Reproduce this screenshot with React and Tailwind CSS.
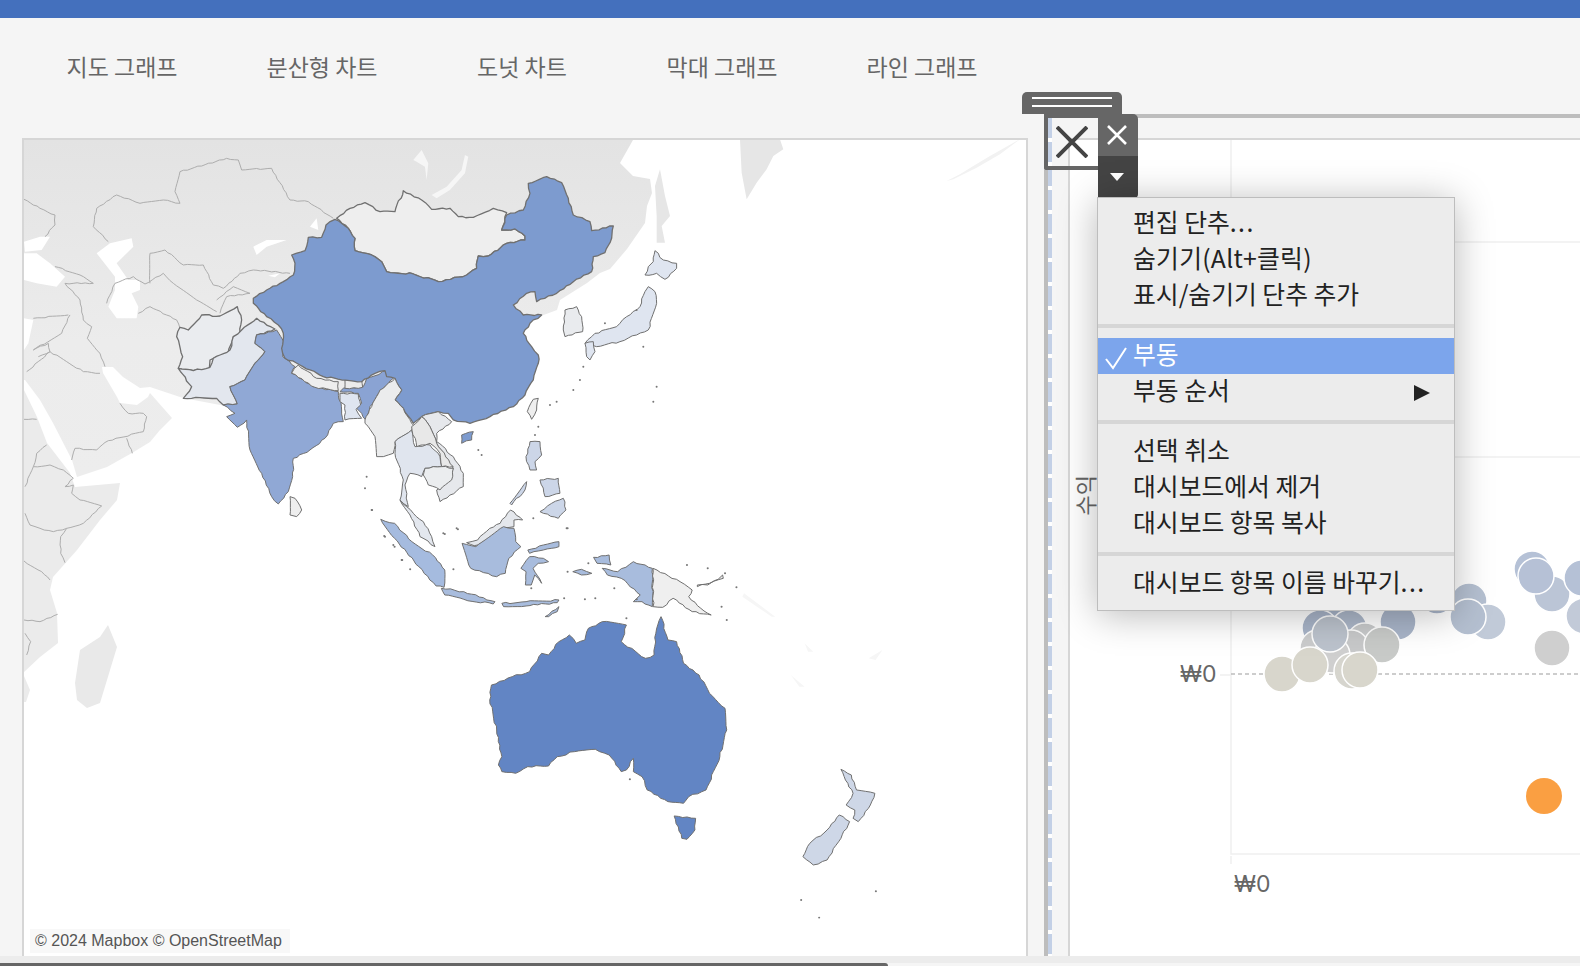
const KR = { fontFamily: '"Noto Sans CJK KR", "Noto Sans", sans-serif' };

const tabs = ['지도 그래프', '분산형 차트', '도넛 차트', '막대 그래프', '라인 그래프'];

// traced from zoomed crops, each group has its own origin
const ASIA = { // origin 240,160
  china: '40,415 80,390 130,365 160,345 165,310 155,285 195,272 205,232 245,232 258,195 285,178 325,205 345,235 345,272 395,285 425,305 440,335 520,342 595,365 680,345 710,325 715,288 745,288 800,250 855,240 855,228 825,207 785,210 800,165 850,150 870,100 865,70 920,50 965,68 985,115 1000,165 1050,185 1055,212 1120,198 1115,235 1095,278 1060,290 1055,335 1000,365 950,400 890,425 885,395 860,400 820,435 850,465 905,465 870,490 850,520 875,560 895,585 895,610 880,660 855,705 820,740 750,770 690,790 640,780 625,760 595,755 545,770 520,790 490,745 465,720 485,690 465,655 440,650 435,632 405,640 365,665 305,660 250,650 210,630 180,615 135,595 125,565 130,520 115,495 80,470 40,430',
  mongolia: '290,175 325,205 345,235 345,272 395,285 425,305 440,335 520,342 595,365 680,345 710,325 715,288 745,288 800,250 855,240 855,228 825,207 785,210 800,158 760,145 700,172 655,170 630,145 575,148 545,120 490,92 465,155 420,155 375,128 330,145',
  myanmar: '375,780 395,740 420,690 465,655 485,690 465,720 490,745 515,790 525,800 510,815 465,845 460,880 430,890 410,890 405,830 375,790',
  thailand: '465,845 515,810 525,860 570,855 600,890 605,920 555,925 545,950 510,940 495,975 505,1040 480,1020 490,960 465,880',
  laos: '515,800 545,770 570,800 590,850 640,920 605,920 600,880 570,850 530,860',
  vietnam: '545,770 595,755 635,785 590,820 590,845 640,890 670,940 670,980 600,1025 590,990 630,960 640,925 590,850 570,800',
  cambodia: '555,925 605,920 640,925 635,960 600,990 565,975 550,945',
  malaya: '480,1020 500,1040 520,1060 550,1085 575,1130 585,1160 540,1130 510,1065',
  lanka: '150,1010 165,1015 185,1050 170,1070 150,1065',
  taiwan: '880,718 895,715 890,750 875,778 862,755',
  hainan: '665,825 700,815 695,840 665,850',
  korea: '975,450 1010,440 1025,470 1028,515 975,530 970,510',
  hokkaido: '1245,272 1270,300 1310,310 1310,325 1275,358 1250,340 1215,345 1225,320 1240,305',
  honshu: '1225,380 1245,395 1250,430 1225,510 1190,525 1140,545 1070,560 1035,550 1065,520 1130,500 1160,470 1200,440 1215,395',
  kyushu: '1035,550 1060,545 1065,575 1050,600 1040,590',
  luzon: '870,845 900,845 905,885 885,905 890,930 870,930 858,890',
  visayas: '900,960 955,955 960,1000 915,1010',
  mindanao: '935,1030 970,1015 978,1050 955,1075 900,1055',
  palawan: '810,1030 860,965 855,990 815,1035',
};

const SOUTH = { // origin 0,130
  india: '770,615 830,600 855,640 848,680 885,710 875,730 940,770 1015,785 1025,840 1030,875 1000,880 975,925 930,960 880,985 878,1040 865,1085 835,1122 815,1100 785,1030 750,960 740,870 712,892 680,860 705,850 670,825 712,822 690,770 735,750 765,700 795,665 765,640',
  assam: '1020,785 1030,775 1090,770 1100,745 1160,722 1180,745 1135,790 1110,830 1100,880 1085,850 1070,835 1085,820 1075,790',
  bhutan: '1035,750 1085,750 1088,772 1035,775',
  nepal: '875,730 895,705 950,745 1015,755 1015,782 945,772',
  bangladesh: '1020,790 1075,792 1082,825 1068,838 1085,865 1035,870 1035,825 1020,815',
  pakistan: '725,600 770,565 825,597 770,615 765,640 795,665 765,700 735,750 690,770 712,822 670,825 650,805 575,805 550,805 575,770 535,715 580,722 630,712 640,685 690,660 700,620',
  afghanistan: '530,620 540,592 565,600 605,555 660,558 712,530 725,570 720,610 700,620 685,670 630,690 628,715 580,722 535,715 548,680',
};

const OCEANIA = { // origin 360,500, x is scaled 2.89
  sumatra: '60,58 100,70 150,125 210,165 245,210 243,262 220,258 170,200 100,115',
  borneo: '295,130 335,140 415,80 445,85 450,125 465,140 430,175 420,220 395,230 345,212 320,205',
  sabah: '308,128 330,137 385,115 410,85 445,80 445,60 470,60 435,30 405,70 375,85 340,120',
  sulawesi: '465,205 490,170 530,175 545,185 515,190 500,205 525,250 505,225 495,255 478,255 480,215',
  sulawesiArm: '485,150 530,135 575,125 575,140 530,150 490,160',
  java: '235,265 300,275 390,305 385,312 300,298 245,285',
  sunda: '410,310 480,305 575,300 570,308 480,318 415,320',
  timor: '535,350 575,320 570,335 545,350',
  papua: '700,205 745,215 790,185 845,205 845,320 815,305 790,305 810,285 755,235 715,225',
  birdshead: '675,172 720,165 725,195 685,190',
  seram: '615,215 640,208 670,220 640,225',
  png: '847,205 925,245 960,270 950,290 985,325 1015,345 960,335 905,295 875,322 847,320',
  britain: '975,260 1010,250 1050,235 1048,225 1035,238 1005,255 975,255',
  australia: '375,600 380,555 440,530 490,515 525,460 545,465 575,425 605,405 625,430 650,420 660,385 700,365 770,375 755,425 825,475 850,465 855,400 870,350 890,420 915,425 935,490 980,525 1010,580 1055,625 1060,690 1040,770 1000,870 950,890 935,910 890,905 830,870 815,830 790,815 790,775 770,810 755,815 720,765 680,748 620,755 570,770 545,798 485,800 450,820 410,815 400,795 410,770 395,690',
  tasmania: '908,948 970,955 968,990 945,1018 930,1015',
  nzSouth: '1280,1070 1300,1030 1350,990 1385,945 1415,965 1390,1015 1350,1080 1310,1095',
  nzNorth: '1390,808 1420,825 1435,870 1488,880 1475,915 1440,965 1425,955 1430,930 1405,915 1425,880 1410,850',
};

const islandDots = [
  [70,108],[100,140],[122,180],[145,208],[245,102],[283,88],[270,208],[600,215],[660,190],[735,265],[800,298],[680,295],[590,295],[650,298],
  [945,195],[1005,205],[1055,220],[1088,262],[1045,320],[1060,360],[770,355],[1275,1200],[1327,1253],[1491,1174],[35,30],[600,85],[495,265],[780,838],
];
const asiaDots = [
  [380,950],[375,985],[395,1050],[435,1130],[460,1155],[485,1200],[610,1120],[650,1105],[715,870],[725,885],[1030,620],[1000,690],[1020,660],
  [930,735],[950,725],[1250,680],[1240,725],[885,825],[895,800],[980,1105],[880,1075],[1190,450],[1095,490],[1210,560],
];

const greyLines = [ // origin 0,130
  '280,290 290,235 350,195 420,220 490,210 540,220 525,185 540,125 680,85 715,90 725,120 815,115 870,210 925,215 1000,265',
  '72,208 120,235 165,255 165,285 135,320',
  '280,290 325,335',
  '450,460 450,370 495,360 550,405 610,405 640,465 670,475 720,430 760,420 870,430',
  '320,520 345,460 400,440 435,462 490,430 520,460 590,510 650,545',
  '415,550 450,530 530,570 540,595',
  '650,510 700,470 750,490 680,500 660,550',
  '165,410 240,435 280,460 195,460 240,510 250,570 275,590 262,625 300,670 315,710',
  '205,555 100,565',
  '210,555 185,610 100,660 145,640 150,665 250,725 300,730',
  '115,680 150,665 80,725',
];
const africaLines = [ // origin 20,380
  '155,240 165,205 230,210 265,182 370,155 380,110 370,100 325,100 300,70',
  '320,175 337,220',
  '12,118 50,118',
  '80,195 50,220 40,260 15,320',
  '40,260 90,255 130,270 160,295 135,320 160,315 155,340 180,360 245,378 190,430 140,445 100,455 60,445 30,435 15,400',
  '140,445 122,470 122,520 135,548',
  '12,543 65,575 90,600',
  '12,720 60,725 113,703',
  '15,760 32,785 20,825',
];

// breaks long straight edges into small wobbles so coasts don't look cut with a ruler
function rough(points, amp = 2.6, closed = true) {
  const p = points.trim().split(' ').map((s) => s.split(',').map(Number));
  const out = [];
  p.forEach((a, i) => {
    out.push(a.join(','));
    if (!closed && i === p.length - 1) return;
    const b = p[(i + 1) % p.length];
    const flip = !(a[0] < b[0] || (a[0] === b[0] && a[1] < b[1]));
    const [u, v] = flip ? [b, a] : [a, b];
    const dx = v[0] - u[0];
    const dy = v[1] - u[1];
    const len = Math.hypot(dx, dy);
    const n = Math.floor(len / 11);
    const mids = [];
    for (let k = 1; k < n; k++) {
      const s = Math.sin(u[0] * 12.9 + u[1] * 78.2 + k * 37.7) * 43758.5;
      const r = (s - Math.floor(s) - 0.5) * 2 * amp;
      mids.push(`${u[0] + (dx * k) / n - (dy / len) * r},${u[1] + (dy * k) / n + (dx / len) * r}`);
    }
    if (flip) mids.reverse();
    out.push(...mids);
  });
  return out.join(' ');
}

function Land({ points, fill, stroke = '#707070', width = 1 }) {
  return <polygon points={rough(points)} fill={fill} stroke={stroke} strokeWidth={width} strokeLinejoin="round" vectorEffect="non-scaling-stroke" />;
}

function Border({ points }) {
  return <polyline points={rough(points, 2, false)} vectorEffect="non-scaling-stroke" />;
}

function MapDrawing() {
  return (
    <svg viewBox="24 140 1002 816" className="block w-full h-full bg-white">
      <defs>
        <linearGradient id="land" x1="0" y1="0" x2="0" y2="1">
          <stop offset="0" stopColor="#e3e3e3" />
          <stop offset="0.6" stopColor="#ececec" />
          <stop offset="1" stopColor="#ededed" />
        </linearGradient>
      </defs>

      {/* grey base map */}
      <polygon fill="url(#land)" points="24,140 633,140 620,163 633,176 650,179 652,193 647,206 645,223 627,249 610,269 600,273 587,283 560,300 557,310 530,320 300,420 183,398 150,387 140,388 123,377 113,367 102,367 103,373 117,397 120,403 137,405 148,397 150,393 172,418 160,430 150,442 132,453 107,467 77,477 72,460 53,423 40,400 25,380 24,380" />
      <polygon fill="#ebebeb" points="24,390 37,417 47,443 70,473 75,487 120,483 117,500 100,520 77,550 53,577 50,590 57,613 58,643 40,657 24,672" />
      <polygon fill="#ebebeb" points="24,676 30,690 26,702 24,702" />
      <polygon fill="#e9e9e9" points="108,625 117,647 100,703 87,708 77,700 75,683 80,650 100,637" />
      <g transform="translate(600 136) scale(.3333)">
        <polygon fill="#e6e6e6" points="420,10 540,10 550,40 520,60 500,100 470,140 440,190 425,110" />
        <polygon fill="#e6e6e6" points="180,100 195,180 210,240 185,270 195,320 170,320 170,240 165,150" />
        <polygon fill="#f2f2f2" points="1040,135 1080,115 1120,90 1170,60 1250,15 1260,10 1200,55 1130,95 1060,130" />
      </g>
      <g transform="translate(360 500) scale(.346 .3333)" fill="#f6f6f6">
        <polygon points="1110,280 1200,350 1190,350 1105,290" />
        <polygon points="1245,525 1285,560 1270,560" />
        <polygon points="1285,430 1310,455 1295,455" />
        <polygon points="1470,475 1510,450 1490,480" />
      </g>

      {/* inland seas */}
      <g transform="translate(0 130) scale(.3333)" fill="#ffffff">
        <polygon points="72,370 110,370 150,400 195,440 170,470 110,460 72,450" />
        <polygon points="72,335 120,320 150,320 125,360 75,365" />
        <polygon points="290,370 330,340 395,325 400,350 350,400 385,450 420,450 420,480 395,490 415,530 410,565 350,565 325,530 345,480 345,440" />
        <polygon points="760,350 800,330 860,330 800,350 770,375" />
        <polygon points="805,437 840,430 825,442" />
        <polygon points="930,290 950,265 955,300" />
        <polygon points="72,565 100,570 85,640 72,660" />
        <polygon fill="#f6f6f6" points="1295,195 1340,170 1385,120 1395,75 1405,80 1395,130 1350,180 1310,205" />
        <polygon fill="#f6f6f6" points="1240,90 1265,60 1285,100 1280,150 1275,110 1250,95" />
      </g>
      <g fill="none" stroke="#adadad" strokeWidth="1">
        <g transform="translate(0 130) scale(.3333)">
          {greyLines.map((l, i) => <Border key={i} points={l} />)}
        </g>
        <g transform="translate(20 380) scale(.3333)">
          {africaLines.map((l, i) => <Border key={i} points={l} />)}
        </g>
      </g>

      {/* countries with data */}
      <g transform="translate(0 130) scale(.3333)">
        <Land points={SOUTH.afghanistan} fill="#eaecef" width={1.3} />
        <Land points={SOUTH.pakistan} fill="#e3e7ee" width={1.3} />
        <Land points={SOUTH.india} fill="#90a8d5" />
        <Land points={SOUTH.assam} fill="#8aa3d3" />
        <Land points={SOUTH.nepal} fill="#eeeeee" />
        <Land points={SOUTH.bhutan} fill="#ebebeb" />
        <Land points={SOUTH.bangladesh} fill="#dfe5f0" />
      </g>
      <g transform="translate(240 160) scale(.3333)">
        <Land points={ASIA.mongolia} fill="#eeeeee" width={1.3} />
        <Land points={ASIA.china} fill="#7d9bcf" width={1.3} />
        <Land points={ASIA.myanmar} fill="#ebeced" />
        <Land points={ASIA.thailand} fill="#e0e5ee" />
        <Land points={ASIA.vietnam} fill="#e6e8ec" />
        <Land points={ASIA.laos} fill="#e8e8e8" />
        <Land points={ASIA.cambodia} fill="#ebedef" />
        <Land points={ASIA.malaya} fill="#e3e7ee" />
        <Land points={ASIA.lanka} fill="#eeeeee" />
        <Land points={ASIA.taiwan} fill="#eeeeee" />
        <Land points={ASIA.hainan} fill="#7d9bcf" />
        <Land points={ASIA.korea} fill="#e9ebee" />
        <Land points={ASIA.hokkaido} fill="#dfe5f0" />
        <Land points={ASIA.honshu} fill="#dfe5f0" />
        <Land points={ASIA.kyushu} fill="#dfe5f0" />
        <Land points={ASIA.luzon} fill="#ccd6e8" />
        <Land points={ASIA.visayas} fill="#ccd6e8" />
        <Land points={ASIA.mindanao} fill="#ccd6e8" />
        <Land points={ASIA.palawan} fill="#ccd6e8" />
        {asiaDots.map(([x, y], i) => <circle key={i} cx={x} cy={y} r="3" fill="#777777" />)}
      </g>
      <g transform="translate(360 500) scale(.346 .3333)">
        <Land points={OCEANIA.sabah} fill="#e4e7ec" />
        <Land points={OCEANIA.sumatra} fill="#a5bbdf" />
        <Land points={OCEANIA.borneo} fill="#a8bcdd" />
        <Land points={OCEANIA.sulawesi} fill="#a8bcdd" />
        <Land points={OCEANIA.sulawesiArm} fill="#a8bcdd" />
        <Land points={OCEANIA.java} fill="#a8bcdd" />
        <Land points={OCEANIA.sunda} fill="#a8bcdd" />
        <Land points={OCEANIA.timor} fill="#a8bcdd" />
        <Land points={OCEANIA.papua} fill="#a8bcdd" />
        <Land points={OCEANIA.birdshead} fill="#a8bcdd" />
        <Land points={OCEANIA.seram} fill="#a8bcdd" />
        <Land points={OCEANIA.png} fill="#efefef" />
        <Land points={OCEANIA.britain} fill="#efefef" />
        <Land points={OCEANIA.australia} fill="#6285c4" />
        <Land points={OCEANIA.tasmania} fill="#6285c4" />
        <Land points={OCEANIA.nzSouth} fill="#ced7e7" />
        <Land points={OCEANIA.nzNorth} fill="#ced7e7" />
        {islandDots.map(([x, y], i) => <circle key={i} cx={x} cy={y} r="3" fill="#777777" />)}
      </g>
    </svg>
  );
}

const dots = [
  [1332, 625, '#a9b5c9'], [1320, 628, '#a9b5c9'], [1349, 628, '#adb8ca'], [1398, 622, '#a9b5c9'], [1437, 596, '#a9b5c9'],
  [1469, 601, '#b5c0d1'], [1488, 622, '#c1cad8'], [1468, 617, '#b5c0d1'],
  [1318, 648, '#cbcccd'], [1365, 641, '#c9cbcc'], [1351, 648, '#c8c9ca'], [1332, 655, '#cfcfcf'], [1352, 671, '#d6d5ce'],
  [1330, 634, '#bcc3cd'], [1382, 645, '#c8cac8'],
  [1282, 674, '#d8d6cc'], [1310, 665, '#d8d6cc'], [1360, 670, '#d8d6cc'],
  [1532, 569, '#b5c1d6'], [1552, 594, '#bbc5d6'], [1536, 576, '#b6c1d6'], [1582, 578, '#b5c1d6'], [1584, 616, '#c2cad8'],
  [1552, 648, '#cfcfcf'], [1544, 796, '#fa9f42'],
];

function ScatterChart() {
  return (
    <svg viewBox="1070 140 510 816" className="block w-full h-full bg-white" style={KR}>
      <g stroke="#f0f0f0" strokeWidth="1.5" fill="none">
        <path d="M1231 140V854H1580" />
        <path d="M1231 242H1580M1231 457H1580" />
        <path d="M1220 675H1231M1231 856V864" />
      </g>
      <path d="M1231 674H1580" stroke="#bdbdbd" strokeWidth="1.5" strokeDasharray="4 3" />
      {dots.map(([x, y, c], i) => (
        <circle key={i} cx={x} cy={y} r="18" fill={c} stroke={c === '#fa9f42' ? 'none' : '#ffffff'} strokeWidth="1.5" />
      ))}
      <text x="1180" y="682" fontSize="23" fill="#666666" style={{ fontFamily: 'Inter, sans-serif' }}>₩0</text>
      <text x="1234" y="892" fontSize="23" fill="#666666" style={{ fontFamily: 'Inter, sans-serif' }}>₩0</text>
    </svg>
  );
}

function MenuRow({ label, dots: ellipsis, active, arrow, tight, wide }) {
  return (
    <div className={`relative h-9 pl-[35px] text-[24.8px] ${tight ? 'leading-[30px]' : 'leading-[32px]'} ${wide ? 'tracking-[0.25px]' : ''} ${active ? 'bg-[#7ca5ec] text-white' : 'text-[#222222]'}`}>
      {active && (
        <svg viewBox="0 0 24 24" className="absolute left-[6px] top-[8px] w-6 h-6" fill="none" stroke="#ffffff" strokeWidth="2">
          <path d="M2 13l7 9L22 2" />
        </svg>
      )}
      {label}
      {ellipsis && <span className="tracking-[1.4px]">...</span>}
      {arrow && (
        <svg viewBox="0 0 16 16" className="absolute right-6 top-[11px] w-4 h-4" fill="#222222">
          <path d="M0 0l16 8L0 16z" />
        </svg>
      )}
    </div>
  );
}

function ContextMenu() {
  return (
    <div className="absolute left-[1097px] top-[197px] w-[358px] h-[414px] bg-[#ececec] border border-[#bdbdbd] shadow-[0_4px_36px_rgba(0,0,0,0.28)]" style={KR}>
      <div className="pt-[7px] pb-[11px]">
        <MenuRow label="편집 단추" dots />
        <MenuRow label="숨기기(Alt+클릭)" wide />
        <MenuRow label="표시/숨기기 단추 추가" />
      </div>
      <div className="h-1 bg-[#d6d6d6]" />
      <div className="py-[10px]">
        <MenuRow label="부동" active tight />
        <MenuRow label="부동 순서" arrow tight />
      </div>
      <div className="h-1 bg-[#d6d6d6]" />
      <div className="pt-[9px] pb-[11px]">
        <MenuRow label="선택 취소" />
        <MenuRow label="대시보드에서 제거" />
        <MenuRow label="대시보드 항목 복사" />
      </div>
      <div className="h-1 bg-[#d6d6d6]" />
      <div className="pt-[9px]">
        <MenuRow label="대시보드 항목 이름 바꾸기" dots />
      </div>
    </div>
  );
}

function FloatingControls() {
  return (
    <>
      <div className="absolute left-[1022px] top-[92px] w-[100px] h-[22px] bg-[#666666] rounded-t-[5px] flex flex-col items-center pt-[5px] gap-[6px]">
        <div className="w-20 h-[2px] bg-white" />
        <div className="w-20 h-[2px] bg-white" />
      </div>
      <div className="absolute left-[1044px] top-[114px] flex">
        <div className="w-[54px] h-[56px] border-4 border-r-0 border-[#666666] rounded-bl-[3px] flex items-center justify-center">
          <svg viewBox="0 0 32 32" className="w-8 h-8 mr-[2px]" stroke="#444444" strokeWidth="4" fill="none">
            <path d="M1 1l30 30M31 1L1 31" />
          </svg>
        </div>
        <div className="w-10 flex flex-col">
          <div className="h-[42px] bg-[#666666] rounded-tr-[5px] flex items-center justify-center">
            <svg viewBox="0 0 20 20" className="w-5 h-5 mr-[2px]" stroke="#ffffff" strokeWidth="2.6" fill="none">
              <path d="M1 1l18 18M19 1L1 19" />
            </svg>
          </div>
          <div className="h-[42px] bg-[#444444] rounded-br-[4px] flex items-center justify-center">
            <svg viewBox="0 0 14 8" className="w-[14px] h-2 mr-[2px]" fill="#ffffff">
              <path d="M0 0h14L7 8z" />
            </svg>
          </div>
        </div>
      </div>
    </>
  );
}

export default function App() {
  return (
    <div className="relative w-[1580px] h-[966px] overflow-hidden bg-[#f5f5f5] flex flex-col" style={KR}>
      <div className="h-[18px] bg-[#4470bd]" />

      <div className="h-[96px] pl-[22px] flex items-center">
        {tabs.map((t) => (
          <div key={t} className="w-[200px] text-center text-[23px] text-[#666666]">{t}</div>
        ))}
      </div>

      <div className="flex-1 min-h-0 flex">
        {/* map panel */}
        <div className="relative ml-[22px] mt-6 w-[1006px] border-2 border-b-0 border-[#d6d6d6]">
          <MapDrawing />
          <div className="absolute left-[6px] bottom-[3px] h-6 pl-[5px] pr-2 leading-6 bg-[#f8f8f8] text-[16px] text-[#555555] [font-family:'Liberation_Sans',sans-serif]">
            © 2024 Mapbox © OpenStreetMap
          </div>
        </div>

        {/* chart panel */}
        <div className="ml-4 flex-1 flex flex-col min-w-0">
          <div className="h-1 bg-[#bdbdbd]" />
          <div className="flex-1 min-h-0 flex">
            <div className="w-1 bg-[#bdbdbd]" />
            <div className="w-1 bg-[repeating-linear-gradient(to_bottom,#c3d0e6_0px,#c3d0e6_20px,#ffffff_20px,#ffffff_24px)]" />
            <div className="flex-1 min-w-0 pl-4 pt-5">
              <div className="relative h-full border-l-2 border-t-2 border-[#d6d6d6]">
                <ScatterChart />
                <span className="absolute left-[2px] top-[335px] text-[22px] leading-[24px] text-[#666666] rotate-180 [writing-mode:vertical-rl] [text-orientation:sideways]">수익</span>
              </div>
            </div>
          </div>
        </div>
      </div>

      <div className="h-[7px] bg-[#ececec]" />
      <div className="h-[3px] w-[888px] bg-[#666666] rounded-tr-[3px]" />

      <FloatingControls />
      <ContextMenu />
    </div>
  );
}
